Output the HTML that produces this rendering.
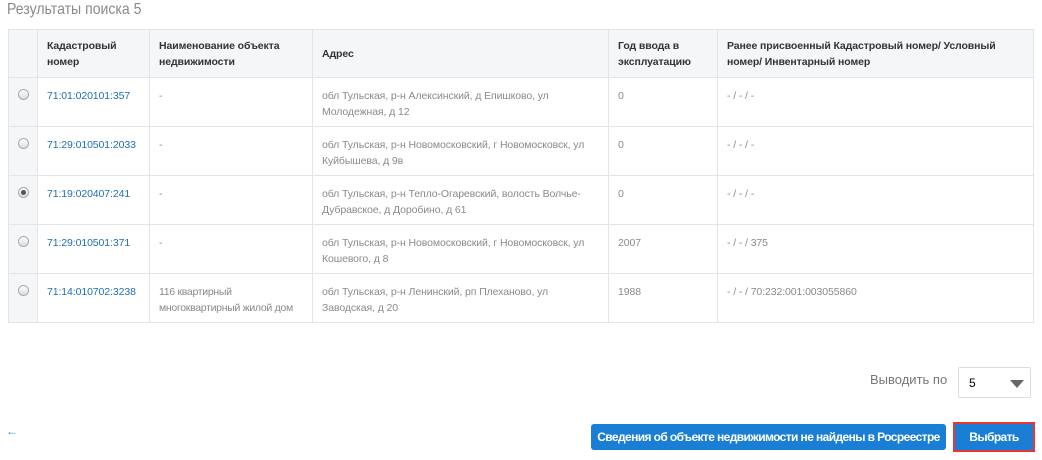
<!DOCTYPE html><html><head><meta charset="utf-8"><style>
body{margin:0;width:1042px;height:460px;background:#fff;font-family:"Liberation Sans",sans-serif;position:relative;overflow:hidden}
.t{position:absolute;left:7px;top:1px;font-size:16px;color:#8a8a8a;transform:scaleX(.88);transform-origin:left}
table{position:absolute;left:8px;top:29px;border-collapse:collapse;width:1026px;table-layout:fixed}
td,th{border:1px solid #e2e6ea;vertical-align:top;font-size:10.5px;line-height:16px;text-align:left;padding:10px 9px 0;letter-spacing:-.1px;overflow:hidden}
th{background:#f4f6f8;color:#333;font-weight:bold;height:39px;padding-top:8px}
td{height:38px;color:#8a8a8a}
td.r{background:#f4f6f8;padding:10px 0 0 9px}
td a{color:#1f6fb5;text-decoration:none}
.rad{display:inline-block;width:9px;height:9px;border-radius:50%;border:1px solid #aaa;background:linear-gradient(#fff,#ddd);margin-top:1px;position:relative}
.rad.on:after{content:"";position:absolute;left:2px;top:2px;width:5px;height:5px;border-radius:50%;background:#555}
.lab{position:absolute;left:870px;top:372px;font-size:13px;color:#777}
.sel{position:absolute;left:958px;top:367px;width:73px;height:31px;border:1px solid #ddd;border-radius:2px;box-sizing:border-box;font-size:12px;padding:8px 10px}
.sel:after{content:"";position:absolute;right:6px;top:12px;border:7px solid transparent;border-top:8px solid #666;border-bottom:0}
.b{position:absolute;background:#1a7fd4;color:#fff;font-size:12px;font-weight:bold;text-align:center;border-radius:3px;letter-spacing:-.6px;white-space:nowrap}
</style></head><body>
<div class="t">Результаты поиска 5</div>
<table>
<colgroup><col style="width:29px"><col style="width:112px"><col style="width:163px"><col style="width:296px"><col style="width:109px"><col></colgroup>
<tr><th></th><th>Кадастровый номер</th><th>Наименование объекта недвижимости</th><th style="vertical-align:middle;padding-top:0">Адрес</th><th>Год ввода в эксплуатацию</th><th>Ранее присвоенный Кадастровый номер/ Условный номер/ Инвентарный номер</th></tr>
<tr><td class="r"><span class="rad"></span></td><td><a>71:01:020101:357</a></td><td>-</td><td>обл Тульская, р-н Алексинский, д Епишково, ул Молодежная, д 12</td><td>0</td><td>- / - / -</td></tr>
<tr><td class="r"><span class="rad"></span></td><td><a>71:29:010501:2033</a></td><td>-</td><td>обл Тульская, р-н Новомосковский, г Новомосковск, ул Куйбышева, д 9в</td><td>0</td><td>- / - / -</td></tr>
<tr><td class="r"><span class="rad on"></span></td><td><a>71:19:020407:241</a></td><td>-</td><td>обл Тульская, р-н Тепло-Огаревский, волость Волчье-Дубравское, д Доробино, д 61</td><td>0</td><td>- / - / -</td></tr>
<tr><td class="r"><span class="rad"></span></td><td><a>71:29:010501:371</a></td><td>-</td><td>обл Тульская, р-н Новомосковский, г Новомосковск, ул Кошевого, д 8</td><td>2007</td><td>- / - / 375</td></tr>
<tr><td class="r"><span class="rad"></span></td><td><a>71:14:010702:3238</a></td><td style="letter-spacing:-.3px">116 квартирный многоквартирный жилой дом</td><td>обл Тульская, р-н Ленинский, рп Плеханово, ул Заводская, д 20</td><td>1988</td><td>- / - / 70:232:001:003055860</td></tr>
</table>
<div class="lab">Выводить по</div>
<div class="sel">5</div>
<div style="position:absolute;left:6px;top:424px;color:#3a8fd0;font-size:12px">←</div>
<div class="b" style="left:591px;top:424px;width:355px;height:26px;line-height:26px">Сведения об объекте недвижимости не найдены в Росреестре</div>
<div class="b" style="left:953px;top:422px;width:82px;height:30px;line-height:26px;border:2px solid #e53935;border-radius:0;box-sizing:border-box">Выбрать</div>
</body></html>
